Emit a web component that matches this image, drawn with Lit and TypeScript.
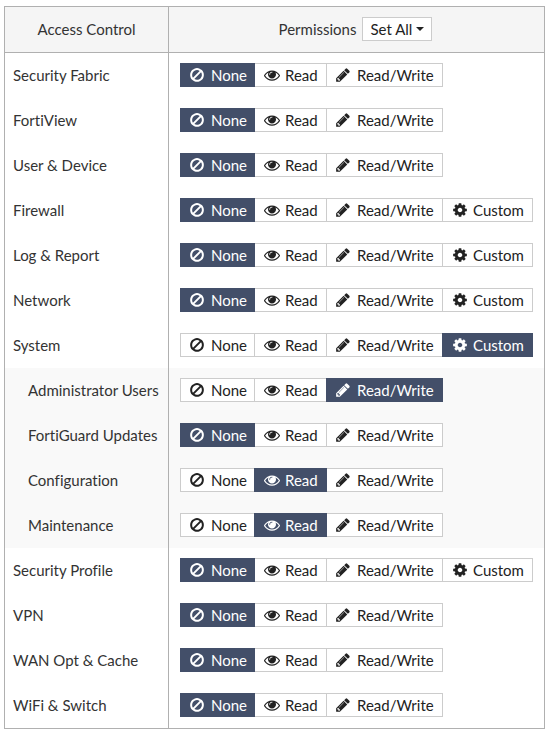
import { LitElement, html, css, svg } from "lit";
import { customElement, property, state } from "lit/decorators.js";
import { classMap } from "lit/directives/class-map.js";

type Level = "none" | "read" | "write" | "custom";

interface Area {
  name: string;
  level: Level;
  custom?: boolean;
  child?: boolean;
}

const LABELS: Record<Level, string> = {
  none: "None",
  read: "Read",
  write: "Read/Write",
  custom: "Custom",
};

const ICONS: Record<Level, string> = {
  none: "M1440 893q0-161-87-295l-754 753q137 89 297 89 111 0 211.5-43.5t173.5-116.5 116-174.5 43-212.5zm-999 299l755-754q-135-91-300-91-148 0-273 73t-198 199-73 274q0 162 89 299zm1223-299q0 157-61 300t-163.5 246-245 164-298.5 61-298.5-61-245-164-163.5-246-61-300 61-299.5 163.5-245.5 245-164 298.5-61 298.5 61 245 164 163.5 245.5 61 299.5z",
  read: "M1664 960q-152-236-381-353 61 104 61 225 0 185-131.5 316.5t-316.5 131.5-316.5-131.5-131.5-316.5q0-121 61-225-229 117-381 353 133 205 333.5 326.5t434.5 121.5 434.5-121.5 333.5-326.5zm-720-384q0-20-14-34t-34-14q-125 0-214.5 89.5t-89.5 214.5q0 20 14 34t34 14 34-14 14-34q0-86 61-147t147-61q20 0 34-14t14-34zm848 384q0 34-20 69-140 230-376.5 368.5t-499.5 138.5-499.5-139-376.5-368q-20-35-20-69t20-69q140-229 376.5-368t499.5-139 499.5 139 376.5 368q20 35 20 69z",
  write: "M491 1536l91-91-235-235-91 91v107h128v128h107zm523-928q0-22-22-22-10 0-17 7l-542 542q-7 7-7 17 0 22 22 22 10 0 17-7l542-542q7-7 7-17zm-54-192l416 416-832 832h-416v-416zm683 96q0 53-37 90l-166 166-416-416 166-165q36-38 90-38 53 0 91 38l235 234q37 39 37 91z",
  custom: "M1152 896q0-106-75-181t-181-75-181 75-75 181 75 181 181 75 181-75 75-181zm512-109v222q0 12-8 23t-20 13l-185 28q-19 54-39 91 35 50 107 138 10 12 10 25t-9 23q-27 37-99 108t-94 71q-12 0-26-9l-138-108q-44 23-91 38-16 136-29 186-7 28-36 28h-222q-14 0-24.5-8.5t-11.5-21.5l-28-184q-49-16-90-37l-141 107q-10 9-25 9-14 0-25-11-126-114-165-168-7-10-7-23 0-12 8-23 15-21 51-66.5t54-70.5q-27-50-41-99l-183-27q-13-2-21-12.5t-8-23.5v-222q0-12 8-23t19-13l186-28q14-46 39-92-40-57-107-138-10-12-10-24 0-10 9-23 26-36 98.5-107.5t94.5-71.5q13 0 26 10l138 107q44-23 91-38 16-136 29-186 7-28 36-28h222q14 0 24.5 8.5t11.5 21.5l28 184q49 16 90 37l142-107q9-9 24-9 13 0 25 10 129 119 165 170 7 8 7 22 0 12-8 23-15 21-51 66.5t-54 70.5q26 50 41 98l183 28q13 2 21 12.5t8 23.5z",
};

@customElement("level-picker")
export class LevelPicker extends LitElement {
  @property() label = "";
  @property() value: Level = "none";
  @property({ type: Boolean }) custom = false;

  static styles = css`
    :host {
      display: block;
    }
    .group {
      display: flex;
    }
    .option {
      display: flex;
      align-items: center;
      gap: 5px;
      box-sizing: border-box;
      height: 24px;
      padding: 0 7px 0 9px;
      border: 1px solid #ccc;
      background: #fff;
      color: #222;
      white-space: nowrap;
      cursor: pointer;
    }
    .option + .option {
      margin-left: -1px;
    }
    .none,
    .write {
      gap: 6px;
      padding-left: 8px;
    }
    .none {
      min-width: 75px;
    }
    .read {
      min-width: 73px;
    }
    .write {
      min-width: 117px;
    }
    .custom {
      min-width: 91px;
    }
    .option.on {
      z-index: 1;
      border-color: #434f69;
      background: #434f69;
      color: #fff;
    }
    .option:focus-within {
      outline: 1px dotted #434f69;
    }
    .radio {
      position: absolute;
      opacity: 0;
      width: 1px;
      height: 1px;
      margin: 0;
    }
    .icon {
      width: 16px;
      height: 16px;
      flex: none;
      fill: currentColor;
    }
  `;

  private pick(level: Level) {
    this.value = level;
    this.dispatchEvent(new CustomEvent("pick", { detail: level }));
  }

  render() {
    const levels: Level[] = ["none", "read", "write"];
    if (this.custom) levels.push("custom");
    return html`<div class="group" role="radiogroup" aria-label=${this.label}>
      ${levels.map(
        (level) => html`<label class=${classMap({ option: true, [level]: true, on: level === this.value })}>
          <input
            class="radio"
            type="radio"
            name="level"
            .value=${level}
            .checked=${level === this.value}
            @change=${() => this.pick(level)}
          />
          <svg class="icon" viewBox="0 0 1792 1792" aria-hidden="true">${svg`<path d=${ICONS[level]} />`}</svg>
          <span>${LABELS[level]}</span>
        </label>`
      )}
    </div>`;
  }
}

@customElement("app-root")
export class AppRoot extends LitElement {
  @state() private areas: Area[] = [
    { name: "Security Fabric", level: "none" },
    { name: "FortiView", level: "none" },
    { name: "User & Device", level: "none" },
    { name: "Firewall", level: "none", custom: true },
    { name: "Log & Report", level: "none", custom: true },
    { name: "Network", level: "none", custom: true },
    { name: "System", level: "custom", custom: true },
    { name: "Administrator Users", level: "write", child: true },
    { name: "FortiGuard Updates", level: "none", child: true },
    { name: "Configuration", level: "read", child: true },
    { name: "Maintenance", level: "read", child: true },
    { name: "Security Profile", level: "none", custom: true },
    { name: "VPN", level: "none" },
    { name: "WAN Opt & Cache", level: "none" },
    { name: "WiFi & Switch", level: "none" },
  ];

  static styles = css`
    :host {
      display: block;
      padding: 6px 7px 10px 4px;
      background: #fff;
      color: #333;
      font: 15px/20px Lato, "Liberation Sans", sans-serif;
      font-variant-ligatures: none;
    }
    .table {
      width: 100%;
      border: 1px solid #b0b0b0;
      border-spacing: 0;
    }
    .head,
    .name,
    .cell {
      box-sizing: border-box;
      height: 45px;
      padding: 0 11px 1px;
      font-weight: 400;
      white-space: nowrap;
    }
    .head {
      height: 46px;
      background: #f5f5f5;
      border-bottom: 1px solid #b0b0b0;
    }
    .name {
      padding: 0 7px 1px 8px;
      text-align: left;
    }
    .first {
      width: 164px;
      border-right: 1px solid #b0b0b0;
    }
    .child {
      background: #f9f9f9;
    }
    .child .name {
      padding-left: 23px;
    }
    .tools {
      display: flex;
      justify-content: center;
      align-items: center;
      gap: 6px;
      padding-right: 2px;
    }
    .set-all {
      display: flex;
      align-items: center;
      gap: 4px;
      height: 24px;
      padding: 0 7px;
      border: 1px solid #ccc;
      background: #fff;
      color: #222;
      font: inherit;
      cursor: pointer;
    }
    .caret {
      border: 4px solid transparent;
      border-top-color: currentColor;
      border-bottom: 0;
    }
  `;

  private setLevel(index: number, level: Level) {
    this.areas = this.areas.map((area, i) => (i === index ? { ...area, level } : area));
  }

  render() {
    return html`<table class="table">
      <thead>
        <tr>
          <th class="head first" scope="col">Access Control</th>
          <th class="head" scope="col">
            <div class="tools">
              <span>Permissions</span>
              <button class="set-all" type="button" aria-haspopup="menu">
                Set All <span class="caret"></span>
              </button>
            </div>
          </th>
        </tr>
      </thead>
      <tbody>
        ${this.areas.map(
          (area, i) => html`<tr class=${classMap({ child: !!area.child })}>
            <th class="name first" scope="row">${area.name}</th>
            <td class="cell">
              <level-picker
                .label=${area.name}
                .value=${area.level}
                .custom=${!!area.custom}
                @pick=${(e: CustomEvent<Level>) => this.setLevel(i, e.detail)}
              ></level-picker>
            </td>
          </tr>`
        )}
      </tbody>
    </table>`;
  }
}
